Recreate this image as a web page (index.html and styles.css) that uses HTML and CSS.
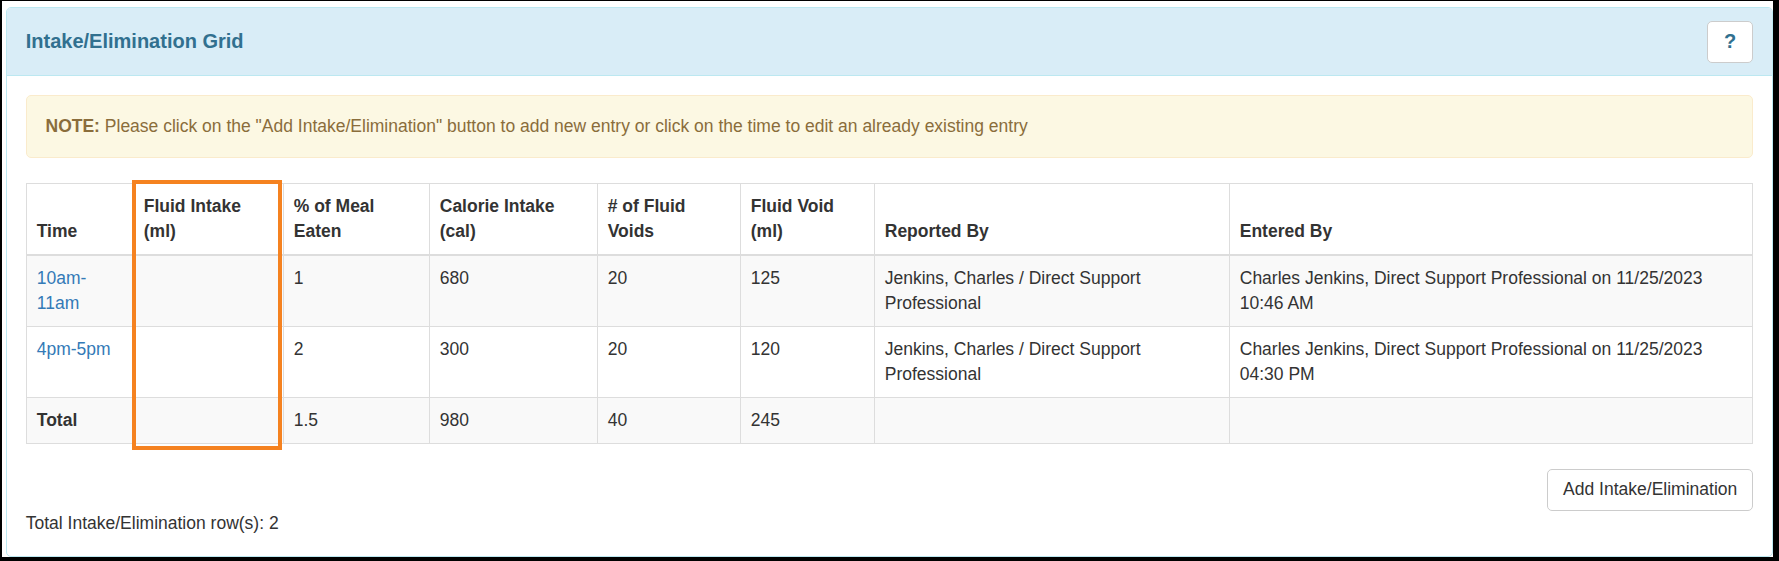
FILE: index.html
```html
<!DOCTYPE html>
<html lang="en">
<head>
<meta charset="utf-8">
<title>Intake/Elimination Grid</title>
<link rel="stylesheet" href="styles.css">
</head>
<body>
<div class="frame">
  <div class="panel">
    <div class="panel-heading">
      <h3 class="panel-title">Intake/Elimination Grid</h3>
      <button class="btn btn-help" type="button">?</button>
    </div>
    <div class="panel-body">
      <div class="alert"><strong>NOTE:</strong> Please click on the "Add Intake/Elimination" button to add new entry or click on the time to edit an already existing entry</div>
      <div class="table-wrap">
        <table class="grid">
          <colgroup>
            <col class="c-time">
            <col class="c-fluid">
            <col class="c-meal">
            <col class="c-cal">
            <col class="c-voids">
            <col class="c-void">
            <col class="c-rep">
            <col class="c-ent">
          </colgroup>
          <thead>
            <tr>
              <th>Time</th>
              <th>Fluid Intake (ml)</th>
              <th>% of Meal Eaten</th>
              <th>Calorie Intake (cal)</th>
              <th># of Fluid Voids</th>
              <th>Fluid Void (ml)</th>
              <th>Reported By</th>
              <th>Entered By</th>
            </tr>
          </thead>
          <tbody>
            <tr>
              <td><a href="#">10am-11am</a></td>
              <td></td>
              <td>1</td>
              <td>680</td>
              <td>20</td>
              <td>125</td>
              <td>Jenkins, Charles / Direct Support Professional</td>
              <td>Charles Jenkins, Direct Support Professional on 11/25/2023 10:46 AM</td>
            </tr>
            <tr>
              <td><a href="#">4pm-5pm</a></td>
              <td></td>
              <td>2</td>
              <td>300</td>
              <td>20</td>
              <td>120</td>
              <td>Jenkins, Charles / Direct Support Professional</td>
              <td>Charles Jenkins, Direct Support Professional on 11/25/2023 04:30 PM</td>
            </tr>
            <tr class="total-row">
              <td><strong>Total</strong></td>
              <td></td>
              <td>1.5</td>
              <td>980</td>
              <td>40</td>
              <td>245</td>
              <td></td>
              <td></td>
            </tr>
          </tbody>
        </table>
        <div class="highlight"></div>
      </div>
      <div class="actions">
        <button class="btn" type="button">Add Intake/Elimination</button>
      </div>
      <div class="row-count">Total Intake/Elimination row(s): 2</div>
    </div>
  </div>
</div>
</body>
</html>
```

FILE: styles.css
```css
* {
  box-sizing: border-box;
}

html,
body {
  margin: 0;
  padding: 0;
}

body {
  font-family: "Liberation Sans", Arial, Helvetica, sans-serif;
  font-size: 17.5px;
  line-height: 25px;
  color: #333;
  background: #fff;
}

.frame {
  width: 1779px;
  height: 561px;
  border-style: solid;
  border-color: #000;
  border-width: 1px 6px 4px 2px;
  padding: 6px 0 0 4px;
  background: #fff;
}

.panel {
  height: 100%;
  border: 1px solid #bce8f1;
  border-radius: 5px;
  background: #fff;
  display: flex;
  flex-direction: column;
  overflow: hidden;
}

.panel-heading {
  background: #d9edf7;
  border-bottom: 1px solid #bce8f1;
  padding: 12.5px 18.75px;
  display: flex;
  align-items: center;
  justify-content: space-between;
}

.panel-title {
  margin: 0;
  font-size: 20px;
  line-height: 25px;
  font-weight: bold;
  color: #31708f;
}

.btn {
  display: inline-block;
  font-family: inherit;
  font-size: 17.5px;
  line-height: 25px;
  padding: 7.5px 15px;
  border: 1px solid #ccc;
  border-radius: 5px;
  background: #fff;
  color: #333;
  cursor: pointer;
}

.btn-help {
  font-size: 20px;
  font-weight: bold;
  color: #31708f;
  padding: 7.5px 16px;
}

.panel-body {
  padding: 18.75px;
}

.alert {
  background: #fcf8e3;
  border: 1px solid #faebcc;
  border-radius: 5px;
  color: #8a6d3b;
  padding: 18px 18.75px;
  margin-bottom: 25px;
}

.table-wrap {
  position: relative;
  margin-bottom: 25px;
}

.grid {
  width: 100%;
  border-collapse: collapse;
  table-layout: fixed;
  border: 1px solid #ddd;
}

.c-time { width: 107px; }
.c-fluid { width: 150px; }
.c-meal { width: 146px; }
.c-cal { width: 168px; }
.c-voids { width: 143px; }
.c-void { width: 134px; }
.c-rep { width: 355px; }
.c-ent { width: auto; }

.grid th,
.grid td {
  padding: 10px;
  border: 1px solid #ddd;
  text-align: left;
  vertical-align: top;
  line-height: 25px;
}

.grid thead th {
  vertical-align: bottom;
  border-bottom: 2px solid #ddd;
  font-weight: bold;
}

.grid tbody tr:nth-child(odd) {
  background: #f9f9f9;
}

.grid a {
  color: #337ab7;
  text-decoration: none;
}

.highlight {
  position: absolute;
  left: 106px;
  top: -3px;
  width: 150px;
  height: 270px;
  border: 4px solid #f58220;
  pointer-events: none;
}

.actions {
  display: flex;
  justify-content: flex-end;
}

.row-count {
  line-height: 25px;
}
```
